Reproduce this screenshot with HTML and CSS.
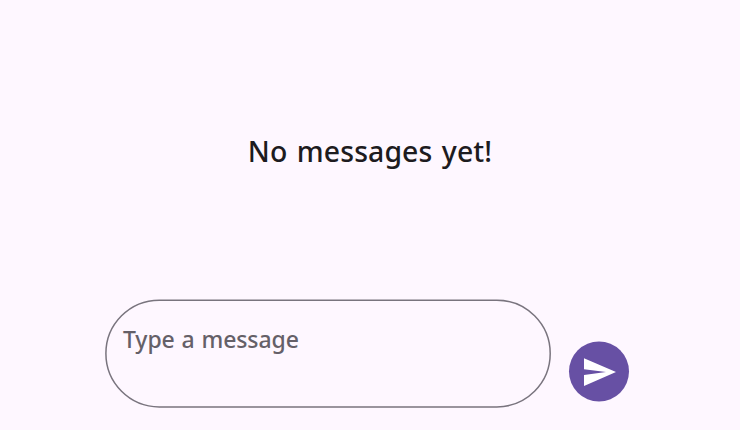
FILE: index.html
```html
<!DOCTYPE html>
<html lang="en">
<head>
<meta charset="utf-8">
<title>Chat</title>
<link rel="stylesheet" href="styles.css">
</head>
<body>
<main class="chat">
  <section class="messages"><p class="empty">No messages yet!</p></section>
  <form class="composer">
    <div class="field">
      <svg class="outline" viewBox="0 0 446 109" aria-hidden="true"><rect x=".9" y="1.2" width="444.3" height="106.7" rx="53.35"/></svg>
      <span class="placeholder">Type a message</span>
    </div>
    <button class="send" type="button" aria-label="Send">
      <svg class="send-icon" viewBox="0 0 60 60"><circle class="disc" cx="30" cy="29.5" r="30"/><path d="M15 16.2 47 30 15 44V32.9L37 30 15 27.2Z"/></svg>
    </button>
  </form>
</main>
</body>
</html>
```

FILE: styles.css
```css
* { box-sizing: border-box; }
body { margin: 0; background: #fef7ff; font-family: "Noto Sans", "Open Sans", sans-serif; }
.chat { height: 430px; display: flex; flex-direction: column; }
.messages { height: 299px; display: flex; justify-content: center; align-items: center; padding-top: 3px; }
.empty { margin: 0; color: #1d1b20; font-size: 28.4px; font-weight: 500; line-height: 40px; letter-spacing: .1px; word-spacing: 2px; }
.composer { display: flex; align-items: flex-end; gap: 18px; padding-left: 105px; }
.field { position: relative; width: 446px; height: 109px; padding: 24px 18px; }
.outline { position: absolute; inset: 0; width: 446px; height: 109px; fill: none; stroke: #79747e; stroke-width: 1.5; }
.placeholder { display: block; color: #656068; font-size: 23px; font-weight: 500; line-height: 32px; letter-spacing: -.1px; word-spacing: 1px; }
.send { width: 60px; height: 60px; margin: 0 0 6px; padding: 0; border: 0; border-radius: 50%; background: none; }
.send-icon { display: block; width: 60px; height: 60px; fill: #fff; overflow: visible; }
.disc { fill: #6750a4; }
```
